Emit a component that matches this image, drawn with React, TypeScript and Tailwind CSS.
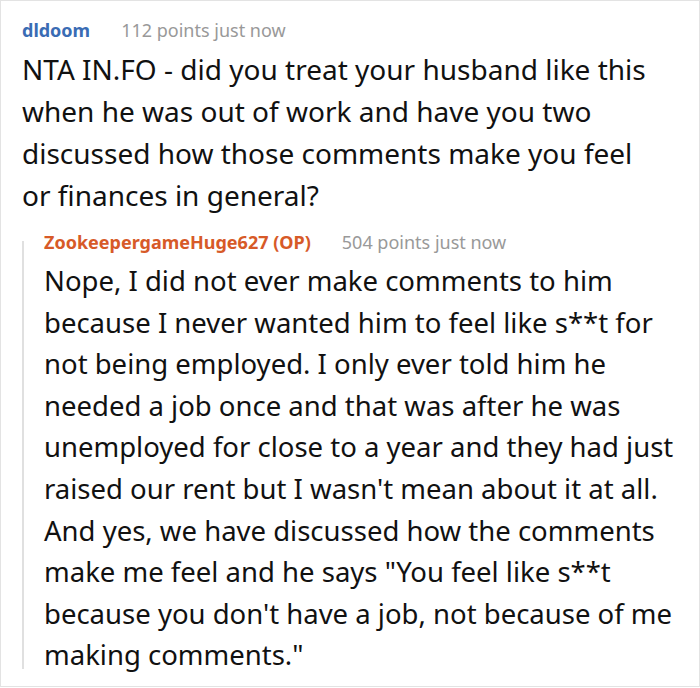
import React from "react";

export default function App() {
  return (
    <div
      className="w-[700px] h-[687px] border border-[#e3e3e3] bg-white pl-[21px] pt-[16px] box-border overflow-hidden"
      style={{ fontFamily: '"Noto Sans", "Open Sans", sans-serif' }}
    >
      <div className="flex items-baseline text-[18px] leading-[26px]">
        <span className="font-bold text-[#3a6cb4]">dldoom</span>
        <span className="ml-[31px] text-[#999999]">112 points just now</span>
      </div>
      <p className="mt-[5px] text-[28px] leading-[42px] text-[#111111] w-[645px]">
        NTA IN.FO - did you treat your husband like this when he was out of work and have you two discussed how those comments make you feel or finances in general?
      </p>
      <div className="mt-[13px] flex">
        <div className="w-[2px] bg-[#e0e0e0] mt-[12px] mb-[7px] shrink-0" />
        <div className="ml-[20px]">
          <div className="flex items-baseline text-[18px] leading-[26px]">
            <span className="font-bold text-[#d75a28]">ZookeepergameHuge627 (OP)</span>
            <span className="ml-[31px] text-[#999999]">504 points just now</span>
          </div>
          <p className="mt-[5px] text-[27.5px] leading-[41.6px] text-[#111111] w-[650px]">
            Nope, I did not ever make comments to him because I never wanted him to feel like s**t for not being employed. I only ever told him he needed a job once and that was after he was unemployed for close to a year and they had just raised our rent but I wasn't mean about it at all. And yes, we have discussed how the comments make me feel and he says "You feel like s**t because you don't have a job, not because of me making comments."
          </p>
        </div>
      </div>
    </div>
  );
}
